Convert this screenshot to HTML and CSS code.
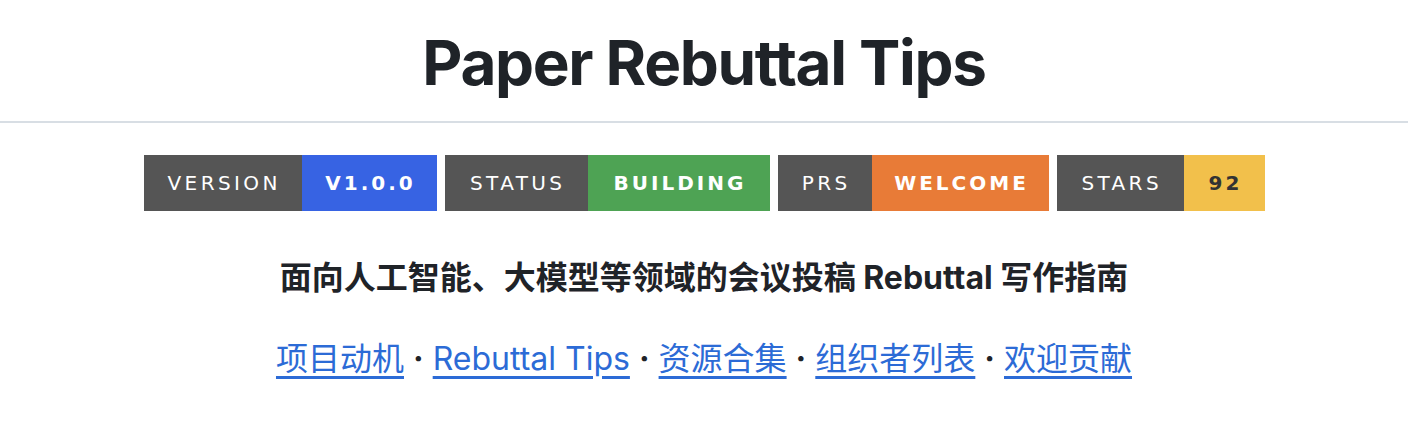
FILE: index.html
```html
<!DOCTYPE html>
<html lang="zh-CN">
<head>
<meta charset="utf-8">
<title>Paper Rebuttal Tips</title>
<link rel="stylesheet" href="styles.css">
</head>
<body>
<div class="page">
  <header class="title-bar">
    <h1 class="title">Paper Rebuttal Tips</h1>
  </header>

  <div class="badges">
    <span class="badge">
      <span class="seg label w-version">Version</span><span class="seg value blue w-v100">V1.0.0</span>
    </span>
    <span class="badge">
      <span class="seg label w-status">Status</span><span class="seg value green w-building">Building</span>
    </span>
    <span class="badge">
      <span class="seg label w-prs">PRs</span><span class="seg value orange w-welcome">Welcome</span>
    </span>
    <span class="badge">
      <span class="seg label w-stars">Stars</span><span class="seg value yellow w-92">92</span>
    </span>
  </div>

  <p class="tagline">面向人工智能、大模型等领域的会议投稿 Rebuttal 写作指南</p>

  <nav class="links">
    <a href="#motivation">项目动机</a><span class="sep">·</span><a href="#tips">Rebuttal Tips</a><span class="sep">·</span><a href="#resources">资源合集</a><span class="sep">·</span><a href="#organizers">组织者列表</a><span class="sep">·</span><a href="#contributing">欢迎贡献</a>
  </nav>
</div>
</body>
</html>
```

FILE: styles.css
```css
* {
  box-sizing: border-box;
}

html,
body {
  margin: 0;
  padding: 0;
  background: #ffffff;
}

body {
  font-family: Inter, "Noto Sans CJK SC", "Noto Sans", sans-serif;
  color: #1f2328;
}

.page {
  margin-right: 8px;
  text-align: center;
}

/* heading with its rule */
.title-bar {
  padding-top: 32px;
  padding-bottom: 27px;
  border-bottom: 2px solid #d8dee4;
}

.title {
  margin: 0;
  font-size: 62px;
  line-height: 62px;
  font-weight: 700;
  letter-spacing: -1.35px;
  color: #1f2328;
}

/* shields-style badges */
.badges {
  margin-top: 32px;
  display: flex;
  justify-content: center;
  gap: 8px;
}

.badge {
  display: flex;
  height: 56px;
}

.seg {
  display: block;
  height: 56px;
  line-height: 56px;
  font-family: "DejaVu Sans", Verdana, sans-serif;
  font-size: 20px;
  text-transform: uppercase;
  text-align: center;
  color: #ffffff;
  white-space: nowrap;
}

.label {
  background: #555555;
  letter-spacing: 3.4px;
  text-indent: 3.4px;
}

.value {
  font-weight: 700;
  letter-spacing: 3px;
  text-indent: 3px;
}

.blue { background: #3763e3; }
.green { background: #4ea354; }
.orange { background: #e87b37; }
.yellow { background: #f2c04b; color: #333333; }

.w-version { width: 158px; }
.w-v100 { width: 135px; }
.w-status { width: 143px; }
.w-building { width: 182px; }
.w-prs { width: 94px; }
.w-welcome { width: 177px; }
.w-stars { width: 127px; }
.w-92 { width: 81px; }

/* subtitle */
.tagline {
  margin: 47px 0 0;
  font-size: 32px;
  line-height: 40px;
  font-weight: 700;
  color: #1f2328;
}

/* section links */
.links {
  margin-top: 41px;
  font-size: 32px;
  line-height: 40px;
  color: #1f2328;
}

.links a {
  color: #2c6bd6;
  text-decoration: underline;
  text-decoration-thickness: 3px;
  text-underline-offset: 6px;
}

.sep {
  display: inline-block;
  padding: 0 9px;
  font-weight: 700;
}
```
